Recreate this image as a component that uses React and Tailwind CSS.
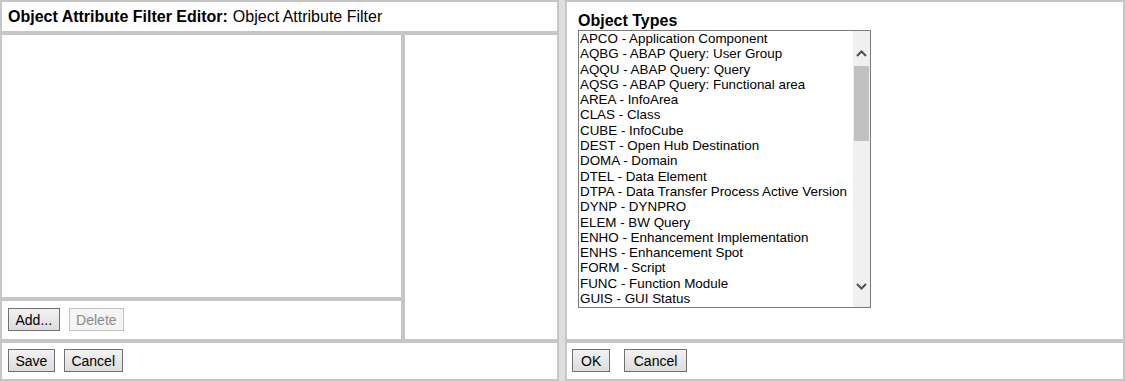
import React from "react";

const TYPES = [
  "APCO - Application Component",
  "AQBG - ABAP Query: User Group",
  "AQQU - ABAP Query: Query",
  "AQSG - ABAP Query: Functional area",
  "AREA - InfoArea",
  "CLAS - Class",
  "CUBE - InfoCube",
  "DEST - Open Hub Destination",
  "DOMA - Domain",
  "DTEL - Data Element",
  "DTPA - Data Transfer Process Active Version",
  "DYNP - DYNPRO",
  "ELEM - BW Query",
  "ENHO - Enhancement Implementation",
  "ENHS - Enhancement Spot",
  "FORM - Script",
  "FUNC - Function Module",
  "GUIS - GUI Status",
];

const panel = "border-2 border-[#c6c6c6] bg-white";

export default function App() {
  return (
    <div
      className="flex h-[381px] w-[1125px] bg-[#dedede] text-black"
      style={{ fontFamily: '"Liberation Sans", Arial, sans-serif' }}
    >
      {/* LEFT: editor */}
      <div className="flex w-[559px] flex-col">
        <div className={`${panel} flex h-[33px] items-center px-[6px] text-[16px]`}>
          <span className="font-bold">Object Attribute Filter Editor:</span>
          <span className="ml-[5px]">Object Attribute Filter</span>
        </div>

        <div className="flex h-[308px]">
          <div className="flex w-[403px] flex-col">
            <div className={`${panel} h-[266px]`} />
            <div className={`${panel} flex h-[42px] items-start gap-[9px] px-[6px] pt-[7px]`}>
              <Btn className="px-[6.5px]">Add...</Btn>
              <Btn disabled className="px-[6.5px]">Delete</Btn>
            </div>
          </div>
          <div className={`${panel} flex-1`} />
        </div>

        <div className={`${panel} flex h-[40px] items-start gap-[9px] px-[6px] pt-[6px]`}>
          <Btn className="px-[6.5px]">Save</Btn>
          <Btn className="px-[6.5px]">Cancel</Btn>
        </div>
      </div>

      <div className="w-[6px]" />

      {/* RIGHT: object types */}
      <div className="flex flex-1 flex-col">
        <div className={`${panel} h-[341px] px-[11px] pt-[9px]`}>
          <div className="text-[16px] font-bold leading-[19px]">Object Types</div>
          <ListBox items={TYPES} />
        </div>
        <div className={`${panel} flex h-[40px] items-start gap-[14px] px-[5px] pt-[6px]`}>
          <Btn className="px-[8px]">OK</Btn>
          <Btn className="px-[8.5px]">Cancel</Btn>
        </div>
      </div>
    </div>
  );
}

function Btn({ children, disabled, className = "" }) {
  return (
    <button
      disabled={disabled}
      className={
        disabled
          ? `h-[23px] border border-[#c2c2c2] bg-[#f4f4f4] text-[14px] leading-none text-[#8a8a8a] ${className}`
          : `h-[23px] border border-[#707070] bg-linear-to-b from-[#f2f2f2] to-[#dcdcdc] text-[14px] leading-none text-black ${className}`
      }
    >
      {children}
    </button>
  );
}

function ListBox({ items }) {
  return (
    <div className="flex h-[278px] w-[293px] overflow-hidden border border-[#7a7a7a] bg-white">
      <div className="flex-1 overflow-hidden pl-[1px] text-[13.4px] leading-[15.3px]">
        {items.map((t) => (
          <div key={t} className="whitespace-nowrap">
            {t}
          </div>
        ))}
      </div>
      <div className="flex w-[17px] flex-col items-center bg-[#f0f0f0]">
        <div className="mt-[18px] flex h-[8px] items-center">
          <Chevron up />
        </div>
        <div className="mt-[9px] h-[75px] w-[15px] bg-[#c1c1c1]" />
        <div className="flex-1" />
        <div className="mb-[17px] flex h-[8px] items-center">
          <Chevron />
        </div>
      </div>
    </div>
  );
}

function Chevron({ up }) {
  return (
    <svg width="11" height="7" viewBox="0 0 11 7">
      <polyline
        points={up ? "1,6 5.5,1.5 10,6" : "1,1 5.5,5.5 10,1"}
        fill="none"
        stroke="#505050"
        strokeWidth="2"
      />
    </svg>
  );
}
